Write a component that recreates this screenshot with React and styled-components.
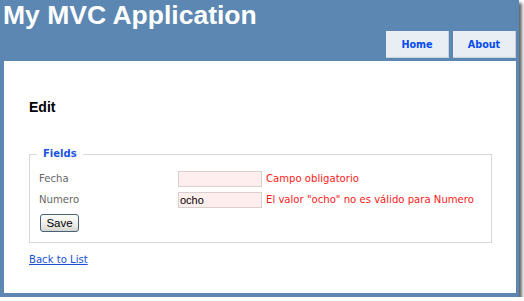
import React from 'react';
import styled, { createGlobalStyle } from 'styled-components';

const GlobalStyle = createGlobalStyle`
    html, body {
        margin: 0;
        padding: 0;
        background: #ffffff;
    }
`;

const App = () => {
    return (
        <>
            <GlobalStyle />
            <Frame>
                <Header>
                    <Title>My MVC Application</Title>
                    <Menu>
                        <Tab href="#">Home</Tab>
                        <Tab href="#">About</Tab>
                    </Menu>
                </Header>
                <Main>
                    <Heading>Edit</Heading>
                    <Fieldset>
                        <Legend>Fields</Legend>
                        <Row>
                            <Label>Fecha</Label>
                            <Input defaultValue="" />
                            <Error>Campo obligatorio</Error>
                        </Row>
                        <Row>
                            <Label>Numero</Label>
                            <Input defaultValue="ocho" />
                            <Error>El valor "ocho" no es válido para Numero</Error>
                        </Row>
                        <SaveButton type="button">Save</SaveButton>
                    </Fieldset>
                    <BackLink href="#">Back to List</BackLink>
                </Main>
            </Frame>
        </>
    );
};

const Frame = styled.div`
    width: 519px;
    height: 297px;
    background-color: #5c87b2;
    box-shadow: 3px 3px 3px rgba(0, 0, 0, 0.6);
    display: flex;
    flex-direction: column;
`;

const Header = styled.div`
    height: 61px;
    display: flex;
    justify-content: space-between;
    align-items: flex-start;
    padding: 0 3px;
    box-sizing: border-box;
`;

const Title = styled.h1`
    margin: 0;
    font-family: 'Liberation Sans', Arial, sans-serif;
    font-size: 26.5px;
    line-height: 30px;
    font-weight: bold;
    color: #ffffff;
`;

const Menu = styled.div`
    display: flex;
    gap: 4px;
    margin-top: 31px;
`;

const Tab = styled.a`
    width: 63px;
    height: 27px;
    box-sizing: border-box;
    display: flex;
    align-items: center;
    justify-content: center;
    background-color: #e8eef4;
    border-right: 1px solid #c9d3de;
    border-bottom: 1px solid #c9d3de;
    font-family: 'DejaVu Sans', Verdana, sans-serif;
    font-size: 9.6px;
    font-weight: bold;
    color: #034af3;
    text-decoration: none;
`;

const Main = styled.div`
    flex: none;
    height: 232px;
    margin: 0 3px 0 4px;
    padding: 38px 24px 0 25px;
    box-sizing: border-box;
    background-color: #ffffff;
    font-family: 'DejaVu Sans', Verdana, sans-serif;
    font-size: 10.1px;
`;

const Heading = styled.h2`
    margin: 0;
    font-family: 'Liberation Sans', Arial, sans-serif;
    font-size: 14px;
    line-height: 16px;
    font-weight: bold;
    color: #000000;
`;

const Fieldset = styled.fieldset`
    margin: 33px 0 0 0;
    padding: 11px 9px 10px 9px;
    border: 1px solid #d8d8d8;
    display: flex;
    flex-direction: column;
    align-items: flex-start;
`;

const Legend = styled.legend`
    margin-left: -2px;
    padding: 0 6px;
    font-size: 10px;
    line-height: 12px;
    font-weight: bold;
    color: #1a55e0;
`;

const Row = styled.div`
    display: flex;
    align-items: center;
    height: 16px;
    margin-bottom: 5px;
`;

const Label = styled.span`
    width: 139px;
    color: #666666;
    line-height: 12px;
`;

const Input = styled.input`
    width: 84px;
    height: 16px;
    box-sizing: border-box;
    margin: 0;
    padding: 0 1px;
    border: 1px solid #d9cfcf;
    background-color: #ffeeee;
    font-family: 'Liberation Sans', Arial, sans-serif;
    font-size: 11px;
    color: #000000;
    outline: none;
`;

const Error = styled.span`
    margin-left: 4px;
    color: #ff1a1a;
    line-height: 12px;
    white-space: nowrap;
`;

const SaveButton = styled.button`
    margin: 1px 0 0 1px;
    width: 39px;
    height: 18px;
    padding: 0;
    border: 1px solid #4a5f78;
    border-radius: 3px;
    background: linear-gradient(#ffffff, #e9e9e4 70%, #d6d6cf);
    font-family: 'Liberation Sans', Arial, sans-serif;
    font-size: 11.5px;
    color: #000000;
`;

const BackLink = styled.a`
    display: inline-block;
    margin-top: 11px;
    line-height: 12px;
    color: #1a4fd6;
    text-decoration: underline;
`;

export default App;
